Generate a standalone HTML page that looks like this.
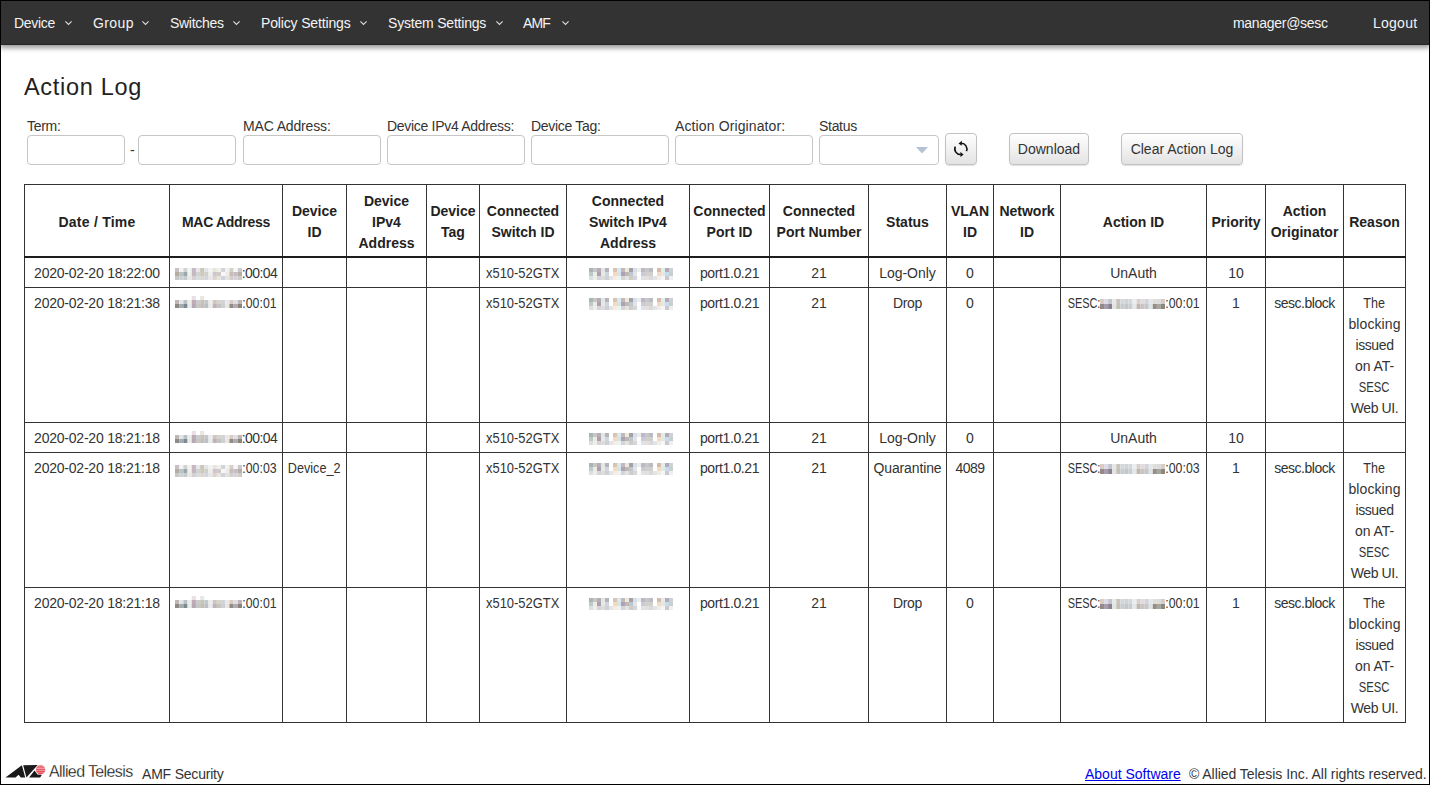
<!DOCTYPE html>
<html><head><meta charset="utf-8">
<style>
*{box-sizing:border-box;margin:0;padding:0}
html,body{width:1430px;height:785px;overflow:hidden;background:#fff}
body{font-family:"Liberation Sans",sans-serif;color:#333;position:relative}
#frame{position:absolute;left:0;top:0;width:1430px;height:785px;border-left:1px solid #000;border-top:1px solid #000;border-right:1px solid #000;border-bottom:1px solid #000;z-index:50;pointer-events:none}
#nav{position:absolute;left:0;top:0;width:1430px;height:45px;background:#333;box-shadow:0 3px 5px rgba(0,0,0,.4);border-bottom:1px solid #262626;z-index:10}
.ni{position:absolute;top:15px;font-size:14px;line-height:16px;color:#f4f4f4;white-space:nowrap;letter-spacing:-0.3px}
.chev{position:absolute;top:20px;width:9px;height:6px}
h1{position:absolute;left:24px;top:72px;font-size:23.5px;letter-spacing:0.7px;font-weight:normal;line-height:30px;color:#222;white-space:nowrap}
.lbl{position:absolute;top:117.5px;font-size:14px;line-height:16px;color:#333;white-space:nowrap;letter-spacing:-0.3px}
.inp{position:absolute;top:135px;height:30px;border:1px solid #c6c6c6;border-radius:4px;background:#fff}
.btn{position:absolute;top:133px;height:32px;border:1px solid #c2c2c2;border-radius:4px;background:linear-gradient(#fff,#e3e3e3);box-shadow:0 1px 1px rgba(0,0,0,.12);font-size:14px;line-height:30px;text-align:center;color:#333;white-space:nowrap}
table{position:absolute;left:24px;top:184px;border-collapse:collapse;table-layout:fixed;font-size:14px;line-height:21px;color:#333}
td,th{border:1px solid #333;padding:5px 0 3px;text-align:center;vertical-align:top;white-space:nowrap;overflow:visible}
th{font-weight:bold;vertical-align:middle;color:#222;padding:6px 0 2px}
th b{font-weight:bold;position:relative;top:-1px}
thead th{border-bottom:2px solid #1d1d1d}
svg.bm,svg.bi,svg.bs{vertical-align:-2px}
svg.bm2{vertical-align:0}
svg.bm4{vertical-align:-4px}
svg.bs{vertical-align:-1px}
svg.bi{margin-left:5px}
#foot{position:absolute;left:0;top:760px;width:1430px;height:25px}
</style></head><body>
<svg width="0" height="0" style="position:absolute"><symbol id="mb1" viewBox="0 0 64 12" preserveAspectRatio="none"><rect x="0" y="0" width="4" height="4" fill="#c8c0c8"/><rect x="4" y="0" width="4" height="4" fill="#f5f3ee"/><rect x="8" y="0" width="4" height="4" fill="#cfd2d9"/><rect x="12" y="0" width="4" height="4" fill="#f3f3f0"/><rect x="16" y="0" width="4" height="4" fill="#c7b9c2"/><rect x="20" y="0" width="4" height="4" fill="#e5e7ec"/><rect x="24" y="0" width="4" height="4" fill="#cac6b8"/><rect x="28" y="0" width="4" height="4" fill="#e1e4e8"/><rect x="32" y="0" width="4" height="4" fill="#f3f3f3"/><rect x="36" y="0" width="4" height="4" fill="#e8e4dc"/><rect x="40" y="0" width="4" height="4" fill="#eef0ee"/><rect x="44" y="0" width="4" height="4" fill="#d3d4da"/><rect x="48" y="0" width="4" height="4" fill="#f1f1ee"/><rect x="52" y="0" width="4" height="4" fill="#d4cfc8"/><rect x="56" y="0" width="4" height="4" fill="#f6f8f8"/><rect x="60" y="0" width="4" height="4" fill="#cdc8cc"/><rect x="0" y="4" width="4" height="4" fill="#b8aca0"/><rect x="4" y="4" width="4" height="4" fill="#b6c4cc"/><rect x="8" y="4" width="4" height="4" fill="#9ea6a6"/><rect x="12" y="4" width="4" height="4" fill="#eff0ed"/><rect x="16" y="4" width="4" height="4" fill="#c4b6c2"/><rect x="20" y="4" width="4" height="4" fill="#d2d3cc"/><rect x="24" y="4" width="4" height="4" fill="#cbcac0"/><rect x="28" y="4" width="4" height="4" fill="#d0cfc8"/><rect x="32" y="4" width="4" height="4" fill="#f0eeea"/><rect x="36" y="4" width="4" height="4" fill="#cdc5cf"/><rect x="40" y="4" width="4" height="4" fill="#d2c9c0"/><rect x="44" y="4" width="4" height="4" fill="#f6f8fc"/><rect x="48" y="4" width="4" height="4" fill="#eeebe6"/><rect x="52" y="4" width="4" height="4" fill="#c8bcb4"/><rect x="56" y="4" width="4" height="4" fill="#c4bccb"/><rect x="60" y="4" width="4" height="4" fill="#b9aea2"/><rect x="0" y="8" width="4" height="4" fill="#c8c8c8"/><rect x="4" y="8" width="4" height="4" fill="#ccd2d2"/><rect x="8" y="8" width="4" height="4" fill="#c4ccd0"/><rect x="12" y="8" width="4" height="4" fill="#e6e8e6"/><rect x="16" y="8" width="4" height="4" fill="#d6d0d0"/><rect x="20" y="8" width="4" height="4" fill="#d8dde3"/><rect x="24" y="8" width="4" height="4" fill="#ddd6d0"/><rect x="28" y="8" width="4" height="4" fill="#d3d6de"/><rect x="32" y="8" width="4" height="4" fill="#e8e4e8"/><rect x="36" y="8" width="4" height="4" fill="#dcd4cc"/><rect x="40" y="8" width="4" height="4" fill="#e6e4e0"/><rect x="44" y="8" width="4" height="4" fill="#cdd4dc"/><rect x="48" y="8" width="4" height="4" fill="#e8e0dc"/><rect x="52" y="8" width="4" height="4" fill="#cdd0cc"/><rect x="56" y="8" width="4" height="4" fill="#dcd0d8"/><rect x="60" y="8" width="4" height="4" fill="#ccccc8"/></symbol>
<symbol id="mb2" viewBox="0 0 64 12" preserveAspectRatio="none"><rect x="16" y="0" width="4" height="4" fill="#e8e0e6"/><rect x="24" y="0" width="4" height="4" fill="#e6e8e4"/><rect x="0" y="4" width="4" height="4" fill="#c2b6b4"/><rect x="4" y="4" width="4" height="4" fill="#dfe6ea"/><rect x="8" y="4" width="4" height="4" fill="#bcc0c6"/><rect x="12" y="4" width="4" height="4" fill="#eceeec"/><rect x="16" y="4" width="4" height="4" fill="#bfaab6"/><rect x="20" y="4" width="4" height="4" fill="#c8ccd0"/><rect x="24" y="4" width="4" height="4" fill="#c8c4b8"/><rect x="28" y="4" width="4" height="4" fill="#c4c8cc"/><rect x="32" y="4" width="4" height="4" fill="#eeeeee"/><rect x="36" y="4" width="4" height="4" fill="#ccc6c4"/><rect x="40" y="4" width="4" height="4" fill="#d8d4cc"/><rect x="44" y="4" width="4" height="4" fill="#d0d4d8"/><rect x="48" y="4" width="4" height="4" fill="#ebe8ec"/><rect x="52" y="4" width="4" height="4" fill="#d8ccbc"/><rect x="56" y="4" width="4" height="4" fill="#dde0ea"/><rect x="60" y="4" width="4" height="4" fill="#c0b4b4"/><rect x="0" y="8" width="4" height="4" fill="#8c8a84"/><rect x="4" y="8" width="4" height="4" fill="#a4acb0"/><rect x="8" y="8" width="4" height="4" fill="#7c8894"/><rect x="12" y="8" width="4" height="4" fill="#e8ebe8"/><rect x="16" y="8" width="4" height="4" fill="#b8a8b4"/><rect x="20" y="8" width="4" height="4" fill="#c4c8c8"/><rect x="24" y="8" width="4" height="4" fill="#c4beb4"/><rect x="28" y="8" width="4" height="4" fill="#bcc0c4"/><rect x="32" y="8" width="4" height="4" fill="#ecebeb"/><rect x="36" y="8" width="4" height="4" fill="#bcb4bc"/><rect x="40" y="8" width="4" height="4" fill="#c8c4bc"/><rect x="44" y="8" width="4" height="4" fill="#c8d0d8"/><rect x="48" y="8" width="4" height="4" fill="#f0e4dc"/><rect x="52" y="8" width="4" height="4" fill="#8c8c88"/><rect x="56" y="8" width="4" height="4" fill="#b4a8b4"/><rect x="60" y="8" width="4" height="4" fill="#8c8478"/></symbol>
<symbol id="ipb" viewBox="0 0 84 12" preserveAspectRatio="none"><rect x="0" y="0" width="4" height="4" fill="#a8b4b8"/><rect x="4" y="0" width="4" height="4" fill="#cec4c4"/><rect x="8" y="0" width="4" height="4" fill="#b4aeb8"/><rect x="12" y="0" width="4" height="4" fill="#e4e6e4"/><rect x="16" y="0" width="4" height="4" fill="#b4b4bc"/><rect x="20" y="0" width="4" height="4" fill="#ffffff"/><rect x="24" y="0" width="4" height="4" fill="#d8c4b0"/><rect x="28" y="0" width="4" height="4" fill="#d8e8f4"/><rect x="32" y="0" width="4" height="4" fill="#c4b8b8"/><rect x="36" y="0" width="4" height="4" fill="#eceade"/><rect x="40" y="0" width="4" height="4" fill="#a8a0a8"/><rect x="44" y="0" width="4" height="4" fill="#d4e0ec"/><rect x="48" y="0" width="4" height="4" fill="#f0ece6"/><rect x="52" y="0" width="4" height="4" fill="#bcb8cc"/><rect x="56" y="0" width="4" height="4" fill="#c8c8c4"/><rect x="60" y="0" width="4" height="4" fill="#b8bcc4"/><rect x="64" y="0" width="4" height="4" fill="#ffffff"/><rect x="68" y="0" width="4" height="4" fill="#d4bca8"/><rect x="72" y="0" width="4" height="4" fill="#e0eeee"/><rect x="76" y="0" width="4" height="4" fill="#b4acb4"/><rect x="80" y="0" width="4" height="4" fill="#ccd0dc"/><rect x="0" y="4" width="4" height="4" fill="#bccaca"/><rect x="4" y="4" width="4" height="4" fill="#ecebe4"/><rect x="8" y="4" width="4" height="4" fill="#aca0ac"/><rect x="12" y="4" width="4" height="4" fill="#e4eae8"/><rect x="16" y="4" width="4" height="4" fill="#d0d4dc"/><rect x="20" y="4" width="4" height="4" fill="#ffffff"/><rect x="24" y="4" width="4" height="4" fill="#f0dcc4"/><rect x="28" y="4" width="4" height="4" fill="#d8e4e4"/><rect x="32" y="4" width="4" height="4" fill="#a8a4bc"/><rect x="36" y="4" width="4" height="4" fill="#c4b8ac"/><rect x="40" y="4" width="4" height="4" fill="#b8c8d4"/><rect x="44" y="4" width="4" height="4" fill="#e4e4e4"/><rect x="48" y="4" width="4" height="4" fill="#ffffff"/><rect x="52" y="4" width="4" height="4" fill="#cccad4"/><rect x="56" y="4" width="4" height="4" fill="#d0d0cc"/><rect x="60" y="4" width="4" height="4" fill="#d0d0cc"/><rect x="64" y="4" width="4" height="4" fill="#ffffff"/><rect x="68" y="4" width="4" height="4" fill="#f0dcc8"/><rect x="72" y="4" width="4" height="4" fill="#e4e8e0"/><rect x="76" y="4" width="4" height="4" fill="#c4dcf4"/><rect x="80" y="4" width="4" height="4" fill="#c8d0cc"/><rect x="0" y="8" width="4" height="4" fill="#dce0e4"/><rect x="4" y="8" width="4" height="4" fill="#f0ece6"/><rect x="8" y="8" width="4" height="4" fill="#d4d4dc"/><rect x="12" y="8" width="4" height="4" fill="#dcdcd8"/><rect x="16" y="8" width="4" height="4" fill="#ccd0d8"/><rect x="20" y="8" width="4" height="4" fill="#e4e4e4"/><rect x="24" y="8" width="4" height="4" fill="#f8ece0"/><rect x="28" y="8" width="4" height="4" fill="#e8f4fc"/><rect x="32" y="8" width="4" height="4" fill="#d8d4d0"/><rect x="36" y="8" width="4" height="4" fill="#e0e4e4"/><rect x="40" y="8" width="4" height="4" fill="#d0ccc8"/><rect x="44" y="8" width="4" height="4" fill="#d8d4dc"/><rect x="48" y="8" width="4" height="4" fill="#f4fcfc"/><rect x="52" y="8" width="4" height="4" fill="#e4e0e8"/><rect x="56" y="8" width="4" height="4" fill="#e4e0dc"/><rect x="60" y="8" width="4" height="4" fill="#d4dce0"/><rect x="64" y="8" width="4" height="4" fill="#e4e4e4"/><rect x="68" y="8" width="4" height="4" fill="#f4ece4"/><rect x="72" y="8" width="4" height="4" fill="#f0f8fc"/><rect x="76" y="8" width="4" height="4" fill="#d0c8c4"/><rect x="80" y="8" width="4" height="4" fill="#eceef8"/></symbol>
<symbol id="sb" viewBox="0 0 64 8" preserveAspectRatio="none"><rect x="0" y="0" width="4" height="4" fill="#d8ccc4"/><rect x="4" y="0" width="4" height="4" fill="#dcdce8"/><rect x="8" y="0" width="4" height="4" fill="#c4c4cc"/><rect x="12" y="0" width="4" height="4" fill="#e4e8e8"/><rect x="16" y="0" width="4" height="4" fill="#c8c4bc"/><rect x="20" y="0" width="4" height="4" fill="#d4d8dc"/><rect x="24" y="0" width="4" height="4" fill="#d0d4d4"/><rect x="28" y="0" width="4" height="4" fill="#d4d8dc"/><rect x="32" y="0" width="4" height="4" fill="#eceeee"/><rect x="36" y="0" width="4" height="4" fill="#d8d0cc"/><rect x="40" y="0" width="4" height="4" fill="#e0dce0"/><rect x="44" y="0" width="4" height="4" fill="#d4d4dc"/><rect x="48" y="0" width="4" height="4" fill="#e4e8e8"/><rect x="52" y="0" width="4" height="4" fill="#e0dcd8"/><rect x="56" y="0" width="4" height="4" fill="#dcdcdc"/><rect x="60" y="0" width="4" height="4" fill="#d8ccc8"/><rect x="0" y="4" width="4" height="4" fill="#948888"/><rect x="4" y="4" width="4" height="4" fill="#a49cac"/><rect x="8" y="4" width="4" height="4" fill="#8c8090"/><rect x="12" y="4" width="4" height="4" fill="#e0e4e4"/><rect x="16" y="4" width="4" height="4" fill="#c4c0b4"/><rect x="20" y="4" width="4" height="4" fill="#c8ccd0"/><rect x="24" y="4" width="4" height="4" fill="#c4c8c4"/><rect x="28" y="4" width="4" height="4" fill="#c8ccd4"/><rect x="32" y="4" width="4" height="4" fill="#e4e8e8"/><rect x="36" y="4" width="4" height="4" fill="#c0b8b0"/><rect x="40" y="4" width="4" height="4" fill="#ccc4c4"/><rect x="44" y="4" width="4" height="4" fill="#c4c8cc"/><rect x="48" y="4" width="4" height="4" fill="#dce4e4"/><rect x="52" y="4" width="4" height="4" fill="#988c84"/><rect x="56" y="4" width="4" height="4" fill="#a4a8a0"/><rect x="60" y="4" width="4" height="4" fill="#8c8880"/></symbol></svg>
<div id="nav">
  <span class="ni" style="left:14px">Device</span>
  <span class="ni" style="left:93px;letter-spacing:0.4px">Group</span>
  <span class="ni" style="left:170px">Switches</span>
  <span class="ni" style="left:261px;letter-spacing:-0.15px">Policy Settings</span>
  <span class="ni" style="left:388px;letter-spacing:-0.2px">System Settings</span>
  <span class="ni" style="left:523px;letter-spacing:-0.9px">AMF</span>
  <span class="ni" style="left:1233px;letter-spacing:-0.3px">manager@sesc</span>
  <span class="ni" style="left:1373px;letter-spacing:0.25px">Logout</span>
  <svg class="chev" style="left:64px" viewBox="0 0 9 6"><polyline points="1.4,1.4 4.5,4.5 7.6,1.4" fill="none" stroke="#ddd" stroke-width="1.1"/></svg>
  <svg class="chev" style="left:141px" viewBox="0 0 9 6"><polyline points="1.4,1.4 4.5,4.5 7.6,1.4" fill="none" stroke="#ddd" stroke-width="1.1"/></svg>
  <svg class="chev" style="left:232px" viewBox="0 0 9 6"><polyline points="1.4,1.4 4.5,4.5 7.6,1.4" fill="none" stroke="#ddd" stroke-width="1.1"/></svg>
  <svg class="chev" style="left:359px" viewBox="0 0 9 6"><polyline points="1.4,1.4 4.5,4.5 7.6,1.4" fill="none" stroke="#ddd" stroke-width="1.1"/></svg>
  <svg class="chev" style="left:495px" viewBox="0 0 9 6"><polyline points="1.4,1.4 4.5,4.5 7.6,1.4" fill="none" stroke="#ddd" stroke-width="1.1"/></svg>
  <svg class="chev" style="left:561px" viewBox="0 0 9 6"><polyline points="1.4,1.4 4.5,4.5 7.6,1.4" fill="none" stroke="#ddd" stroke-width="1.1"/></svg>
</div>
<h1>Action Log</h1>
<span class="lbl" style="left:27px">Term:</span>
<span class="lbl" style="left:243px;letter-spacing:-0.15px">MAC Address:</span>
<span class="lbl" style="left:387px">Device IPv4 Address:</span>
<span class="lbl" style="left:531px">Device Tag:</span>
<span class="lbl" style="left:675px;letter-spacing:0.12px">Action Originator:</span>
<span class="lbl" style="left:819px">Status</span>
<div class="inp" style="left:27px;width:98px"></div>
<div class="lbl" style="left:130px;top:142px">-</div>
<div class="inp" style="left:138px;width:98px"></div>
<div class="inp" style="left:243px;width:138px"></div>
<div class="inp" style="left:387px;width:138px"></div>
<div class="inp" style="left:531px;width:138px"></div>
<div class="inp" style="left:675px;width:138px"></div>
<div class="inp" style="left:819px;width:120px"></div>
<svg style="position:absolute;left:915px;top:146px" width="14" height="9" viewBox="0 0 14 9"><polygon points="1,1 13,1 7,7.6" fill="#b5c2d3"/></svg>
<div class="btn" style="left:945px;width:32px"></div>
<svg style="position:absolute;left:950px;top:139px" width="22" height="20" viewBox="0 0 22 20">
  <path d="M11.2 4.3 A5.6 5.6 0 0 1 16.4 12.2" fill="none" stroke="#111" stroke-width="1.6"/>
  <polygon points="8.5,4.4 11.9,1.7 11.7,6.7" fill="#111"/>
  <path d="M5.3 7.6 A5.6 5.6 0 0 0 10.8 15.5" fill="none" stroke="#111" stroke-width="1.6"/>
  <polygon points="13.6,15.4 10.3,12.9 10.5,17.9" fill="#111"/>
</svg>
<div class="btn" style="left:1009px;width:80px">Download</div>
<div class="btn" style="left:1121px;width:122px">Clear Action Log</div>

<table>
<colgroup>
<col style="width:145px"><col style="width:113px"><col style="width:64px"><col style="width:80px"><col style="width:53px"><col style="width:87px"><col style="width:123px"><col style="width:80px"><col style="width:99px"><col style="width:78px"><col style="width:47px"><col style="width:67px"><col style="width:146px"><col style="width:59px"><col style="width:78px"><col style="width:62px">
</colgroup>
<thead><tr>
<th style="letter-spacing:0.25px">Date / Time</th><th style="letter-spacing:-0.3px">MAC Address</th><th><b>Device<br>ID</b></th><th>Device<br>IPv4<br>Address</th><th><b>Device<br>Tag</b></th><th><b>Connected<br>Switch ID</b></th><th>Connected<br>Switch IPv4<br>Address</th><th><b>Connected<br>Port ID</b></th><th><b>Connected<br>Port Number</b></th><th>Status</th><th><b>VLAN<br>ID</b></th><th><b>Network<br>ID</b></th><th>Action ID</th><th>Priority</th><th><b>Action<br>Originator</b></th><th>Reason</th>
</tr></thead>
<tbody>
<tr><td><span style="letter-spacing:-0.22px">2020-02-20 18:22:00</span></td><td><svg class="bm" width="67" height="12"><use href="#mb1"/></svg><span style="letter-spacing:-0.60px">:00:04</span></td><td></td><td></td><td></td><td><span style="display:inline-block;transform:scaleX(0.925);margin:0 -2.98px">x510-52GTX</span></td><td><svg class="bi" width="84" height="12"><use href="#ipb"/></svg></td><td><span style="letter-spacing:-0.38px">port1.0.21</span></td><td>21</td><td><span style="letter-spacing:-0.06px">Log-Only</span></td><td>0</td><td></td><td><span style="letter-spacing:0.00px">UnAuth</span></td><td>10</td><td></td><td></td></tr>
<tr><td><span style="letter-spacing:-0.22px">2020-02-20 18:21:38</span></td><td><svg class="bm2" width="67" height="12"><use href="#mb2"/></svg><span style="display:inline-block;transform:scaleX(0.879);margin:0 -2.34px">:00:01</span></td><td></td><td></td><td></td><td><span style="display:inline-block;transform:scaleX(0.925);margin:0 -2.98px">x510-52GTX</span></td><td><svg class="bi" width="84" height="12"><use href="#ipb"/></svg></td><td><span style="letter-spacing:-0.38px">port1.0.21</span></td><td>21</td><td><span style="letter-spacing:-0.33px">Drop</span></td><td>0</td><td></td><td><span style="display:inline-block;transform:scaleX(0.779);margin:0 -4.65px">SESC:</span><svg class="bs" width="65" height="10"><use href="#sb"/></svg><span style="display:inline-block;transform:scaleX(0.879);margin:0 -2.34px">:00:01</span></td><td>1</td><td><span style="letter-spacing:-0.47px">sesc.block</span></td><td><div class="rs"><span style="display:inline-block;transform:scaleX(0.896);margin:0 -1.26px">The</span><br><span style="letter-spacing:0.11px">blocking</span><br><span style="letter-spacing:-0.40px">issued</span><br><span style="letter-spacing:-0.06px">on AT-</span><br><span style="display:inline-block;transform:scaleX(0.805);margin:0 -3.71px">SESC</span><br><span style="letter-spacing:-0.38px">Web UI.</span></div></td></tr>
<tr><td><span style="letter-spacing:-0.22px">2020-02-20 18:21:18</span></td><td><svg class="bm2" width="67" height="12"><use href="#mb2"/></svg><span style="letter-spacing:-0.60px">:00:04</span></td><td></td><td></td><td></td><td><span style="display:inline-block;transform:scaleX(0.925);margin:0 -2.98px">x510-52GTX</span></td><td><svg class="bi" width="84" height="12"><use href="#ipb"/></svg></td><td><span style="letter-spacing:-0.38px">port1.0.21</span></td><td>21</td><td><span style="letter-spacing:-0.06px">Log-Only</span></td><td>0</td><td></td><td><span style="letter-spacing:0.00px">UnAuth</span></td><td>10</td><td></td><td></td></tr>
<tr><td><span style="letter-spacing:-0.22px">2020-02-20 18:21:18</span></td><td><svg class="bm4" width="67" height="12"><use href="#mb1"/></svg><span style="display:inline-block;transform:scaleX(0.879);margin:0 -2.34px">:00:03</span></td><td><span style="display:inline-block;transform:scaleX(0.905);margin:0 -2.77px">Device_2</span></td><td></td><td></td><td><span style="display:inline-block;transform:scaleX(0.925);margin:0 -2.98px">x510-52GTX</span></td><td><svg class="bi" width="84" height="12"><use href="#ipb"/></svg></td><td><span style="letter-spacing:-0.38px">port1.0.21</span></td><td>21</td><td><span style="letter-spacing:-0.13px">Quarantine</span></td><td><span style="letter-spacing:-0.53px">4089</span></td><td></td><td><span style="display:inline-block;transform:scaleX(0.779);margin:0 -4.65px">SESC:</span><svg class="bs" width="65" height="10"><use href="#sb"/></svg><span style="display:inline-block;transform:scaleX(0.879);margin:0 -2.34px">:00:03</span></td><td>1</td><td><span style="letter-spacing:-0.47px">sesc.block</span></td><td><div class="rs"><span style="display:inline-block;transform:scaleX(0.896);margin:0 -1.26px">The</span><br><span style="letter-spacing:0.11px">blocking</span><br><span style="letter-spacing:-0.40px">issued</span><br><span style="letter-spacing:-0.06px">on AT-</span><br><span style="display:inline-block;transform:scaleX(0.805);margin:0 -3.71px">SESC</span><br><span style="letter-spacing:-0.38px">Web UI.</span></div></td></tr>
<tr><td><span style="letter-spacing:-0.22px">2020-02-20 18:21:18</span></td><td><svg class="bm2" width="67" height="12"><use href="#mb2"/></svg><span style="display:inline-block;transform:scaleX(0.879);margin:0 -2.34px">:00:01</span></td><td></td><td></td><td></td><td><span style="display:inline-block;transform:scaleX(0.925);margin:0 -2.98px">x510-52GTX</span></td><td><svg class="bi" width="84" height="12"><use href="#ipb"/></svg></td><td><span style="letter-spacing:-0.38px">port1.0.21</span></td><td>21</td><td><span style="letter-spacing:-0.33px">Drop</span></td><td>0</td><td></td><td><span style="display:inline-block;transform:scaleX(0.779);margin:0 -4.65px">SESC:</span><svg class="bs" width="65" height="10"><use href="#sb"/></svg><span style="display:inline-block;transform:scaleX(0.879);margin:0 -2.34px">:00:01</span></td><td>1</td><td><span style="letter-spacing:-0.47px">sesc.block</span></td><td><div class="rs"><span style="display:inline-block;transform:scaleX(0.896);margin:0 -1.26px">The</span><br><span style="letter-spacing:0.11px">blocking</span><br><span style="letter-spacing:-0.40px">issued</span><br><span style="letter-spacing:-0.06px">on AT-</span><br><span style="display:inline-block;transform:scaleX(0.805);margin:0 -3.71px">SESC</span><br><span style="letter-spacing:-0.38px">Web UI.</span></div></td></tr>
</tbody>
</table>

<div id="foot">
<svg style="position:absolute;left:3px;top:2px" width="46" height="18" viewBox="3 762 46 18">
  <defs><linearGradient id="rg" x1="0" y1="0" x2="0" y2="1"><stop offset="0" stop-color="#ec8a92"/><stop offset="1" stop-color="#e0202e"/></linearGradient></defs>
  <polygon points="5.5,777.6 21.9,765.3 25.2,777.6 20.8,777.6 18.6,774.8 15.5,777.6" fill="#1a1a1a"/>
  <polygon points="23.2,765.3 37.7,765.1 26.4,777.6" fill="#1a1a1a"/>
  <polygon points="29.1,777.6 34.5,770.6 37.5,774.6 41.8,775.1 40.1,777.6" fill="#1a1a1a"/>
  <clipPath id="cc"><circle cx="40.6" cy="769.8" r="4.7"/></clipPath><circle cx="40.6" cy="769.8" r="4.7" fill="url(#rg)"/>
  <g clip-path="url(#cc)"><rect x="35" y="768.2" width="12" height="0.6" fill="#f7c4c8"/>
  <rect x="35" y="770.4" width="12" height="0.7" fill="#f7c4c8"/>
  <rect x="35" y="772.5" width="12" height="0.7" fill="#f7c4c8"/></g>
</svg>
<span style="position:absolute;left:49px;top:3px;font-size:16px;line-height:18px;color:#000;letter-spacing:-0.62px;-webkit-text-stroke:0.3px #fff;white-space:nowrap">Allied Telesis</span>
<span style="position:absolute;left:142px;top:6px;font-size:14px;line-height:16px;color:#333;letter-spacing:-0.2px;white-space:nowrap">AMF Security</span>
<span style="position:absolute;left:1085px;top:6px;font-size:14px;line-height:16px;color:#00e;text-decoration:underline;text-underline-offset:1px;white-space:nowrap;letter-spacing:0">About Software</span>
<span style="position:absolute;left:1189px;top:6px;font-size:14px;line-height:16px;color:#333;white-space:nowrap;letter-spacing:-0.05px">© Allied Telesis Inc. All rights reserved.</span>
</div>
<div id="frame"></div>
</body></html>
